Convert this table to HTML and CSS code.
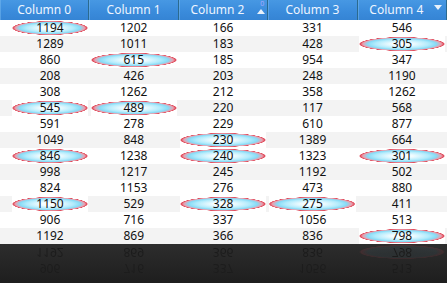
FILE: index.html
```html
<!DOCTYPE html>
<html>
<head>
<meta charset="utf-8">
<link rel="stylesheet" href="styles.css">
</head>
<body>
<div class="grid">
  <div class="head">
    <div class="hc">Column 0</div>
    <div class="hc">Column 1</div>
    <div class="hc sorted">Column 2<span class="arrow up"></span><span class="idx">0</span></div>
    <div class="hc">Column 3</div>
    <div class="hc sorted">Column 4<span class="arrow down"></span></div>
  </div>
  <div class="body" id="body"></div>
  <div class="reflect">
    <div class="mirror">
      <div class="flip" id="flip"></div>
    </div>
  </div>
</div>
<script src="app.js"></script>
</body>
</html>
```
FILE: app.js
```js
var data = [
  [[1194,1],[1202],[166],[331],[546]],
  [[1289],[1011],[183],[428],[305,1]],
  [[860],[615,1],[185],[954],[347]],
  [[208],[426],[203],[248],[1190]],
  [[308],[1262],[212],[358],[1262]],
  [[545,1],[489,1],[220],[117],[568]],
  [[591],[278],[229],[610],[877]],
  [[1049],[848],[230,1],[1389],[664]],
  [[846,1],[1238],[240,1],[1323],[301,1]],
  [[998],[1217],[245],[1192],[502]],
  [[824],[1153],[276],[473],[880]],
  [[1150,1],[529],[328,1],[275,1],[411]],
  [[906],[716],[337],[1056],[513]],
  [[1192],[869],[366],[836],[798,1]]
];
function makeRow(r, i) {
  var row = document.createElement('div');
  row.className = 'row ' + (i % 2 ? 'alt' : '');
  r.forEach(function (c) {
    var cell = document.createElement('div');
    cell.className = 'cell';
    var box = document.createElement('div');
    box.className = 'box' + (c[1] ? ' hl' : '');
    box.textContent = c[0];
    cell.appendChild(box);
    row.appendChild(cell);
  });
  return row;
}
var body = document.getElementById('body');
data.forEach(function (r, i) { body.appendChild(makeRow(r, i)); });
var flip = document.getElementById('flip');
[12, 13].forEach(function (i) { flip.appendChild(makeRow(data[i], i)); });
```
FILE: styles.css
```css
html, body {
  margin: 0;
  padding: 0;
  background: #1f1f1f;
}
body {
  width: 447px;
  height: 283px;
  overflow: hidden;
  font-family: "Noto Sans", "Open Sans", sans-serif;
  font-size: 12px;
}
.grid {
  width: 447px;
  display: flex;
  flex-direction: column;
}
.head {
  display: grid;
  grid-template-columns: repeat(5, 1fr);
  height: 20px;
  background: linear-gradient(#4798e3, #3a8bdb 60%, #3584d4);
}
.hc {
  position: relative;
  display: flex;
  align-items: center;
  justify-content: center;
  color: #eef5ff;
  border-right: 1px solid #2b6a8f;
  box-shadow: inset 1px 0 0 rgba(120, 185, 240, 0.5);
  line-height: 20px;
}
.hc.sorted {
  padding-right: 11px;
}
.arrow {
  position: absolute;
  width: 0;
  height: 0;
  border-left: 4.5px solid transparent;
  border-right: 4.5px solid transparent;
}
.arrow.up {
  right: 2px;
  top: 9px;
  border-bottom: 5px solid #e8f2fb;
}
.arrow.down {
  right: 4px;
  top: 5px;
  border-top: 5px solid #e8f2fb;
}
.idx {
  position: absolute;
  right: 3px;
  top: -6px;
  font-size: 7px;
  color: #a8a8ff;
}
.body {
  display: flex;
  flex-direction: column;
}
.row {
  display: grid;
  grid-template-columns: repeat(5, 1fr);
  height: 16px;
  background: #ffffff;
}
.row.alt {
  background: #f3f3f3;
}
.cell {
  display: flex;
  padding: 0 2px 0 1.3px;
  color: #111;
}
.cell:first-child {
  padding-left: 12px;
  padding-right: 1.4px;
}
.box {
  flex: 1;
  display: flex;
  align-items: center;
  justify-content: center;
  line-height: 16px;
}
.box.hl {
  background:
    radial-gradient(closest-side, #ffffff 0%, #f2fcff 25%, #b2ebfc 62%, #86dbf6 80%, #e9a0ae 91%, #e04a5a 97%, rgba(224, 74, 90, 0) 100%) center / 100% 14px no-repeat,
    #ffffff;
}
.reflect {
  height: 39px;
  overflow: hidden;
  background: linear-gradient(#2d2d2d, #1e1e1e);
}
.mirror {
  -webkit-mask-image: linear-gradient(rgba(0,0,0,1), rgba(0,0,0,0.35) 32px);
  mask-image: linear-gradient(rgba(0,0,0,1), rgba(0,0,0,0.35) 32px);
}
.flip {
  transform: scaleY(-1);
  opacity: 0.4;
}
.flip .row,
.flip .row.alt,
.flip .box.hl {
  background: transparent;
}
.flip .cell {
  color: #000;
}
.flip .box.hl {
  background: radial-gradient(closest-side, rgba(120, 200, 230, 0.15) 0%, rgba(120, 200, 230, 0.2) 80%, rgba(224, 74, 90, 0.4) 95%, rgba(224, 74, 90, 0) 100%) center / 100% 14px no-repeat;
}
```
